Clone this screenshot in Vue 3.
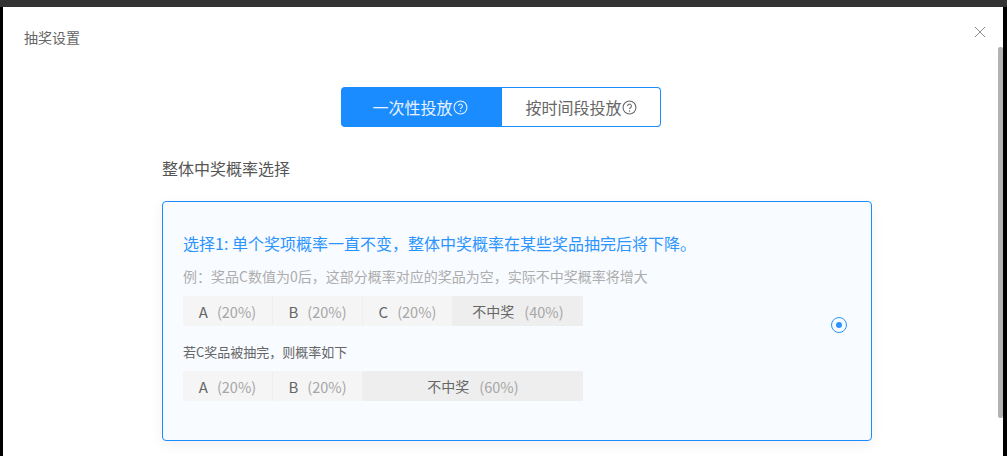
<script setup>
const rowA = [
  { name: 'A', pct: '(20%)' },
  { name: 'B', pct: '(20%)' },
  { name: 'C', pct: '(20%)' },
]
const rowB = [
  { name: 'A', pct: '(20%)' },
  { name: 'B', pct: '(20%)' },
]
</script>

<template>
  <div class="screen">
    <div class="dialog">
      <header class="head">
        <span class="head-title">抽奖设置</span>
        <svg class="close" width="12" height="12" viewBox="0 0 12 12" aria-hidden="true">
          <path d="M1 1l10 10M11 1L1 11" stroke="#8c8c8c" stroke-width="1" fill="none" />
        </svg>
      </header>

      <div class="tabs">
        <div class="tab active">
          一次性投放
          <svg class="help" width="15" height="15" viewBox="0 0 14 14" aria-hidden="true">
            <circle cx="7" cy="7" r="6" fill="none" stroke="currentColor" />
            <path d="M5.2 5.6a1.8 1.8 0 1 1 2.7 1.6c-.6.3-.9.6-.9 1.3" fill="none" stroke="currentColor" />
            <circle cx="7" cy="10.2" r=".7" fill="currentColor" />
          </svg>
        </div>
        <div class="tab">
          按时间段投放
          <svg class="help" width="15" height="15" viewBox="0 0 14 14" aria-hidden="true">
            <circle cx="7" cy="7" r="6" fill="none" stroke="currentColor" />
            <path d="M5.2 5.6a1.8 1.8 0 1 1 2.7 1.6c-.6.3-.9.6-.9 1.3" fill="none" stroke="currentColor" />
            <circle cx="7" cy="10.2" r=".7" fill="currentColor" />
          </svg>
        </div>
      </div>

      <div class="section">
        <h3 class="section-title">整体中奖概率选择</h3>
        <div class="card">
          <div class="card-body">
            <div class="card-title">选择1: 单个奖项概率一直不变，整体中奖概率在某些奖品抽完后将下降。</div>
            <div class="card-desc">例：奖品C数值为0后，这部分概率对应的奖品为空，实际不中奖概率将增大</div>
            <div class="bar">
              <div v-for="s in rowA" :key="s.name" class="seg">
                <span class="nm">{{ s.name }}</span><span class="pct">{{ s.pct }}</span>
              </div>
              <div class="seg none w130">
                <span class="nm cjk">不中奖</span><span class="pct">(40%)</span>
              </div>
            </div>
            <div class="card-note">若C奖品被抽完，则概率如下</div>
            <div class="bar">
              <div v-for="s in rowB" :key="s.name" class="seg">
                <span class="nm">{{ s.name }}</span><span class="pct">{{ s.pct }}</span>
              </div>
              <div class="seg none w220">
                <span class="nm cjk">不中奖</span><span class="pct">(60%)</span>
              </div>
            </div>
          </div>
          <span class="radio"><span class="dot"></span></span>
        </div>
      </div>

      <div class="scrollbar"></div>
    </div>
  </div>
</template>

<style>
html, body { margin: 0; background: #000; overflow: hidden; }
</style>

<style scoped>
.screen {
  width: 1007px;
  height: 456px;
  background: #000;
  overflow: hidden;
  font-family: "Noto Sans CJK SC", "Noto Sans", sans-serif;
  box-sizing: border-box;
  border-top: 7px solid #333;
  padding-left: 3px;
  padding-right: 4px;
}
.dialog {
  position: relative;
  background: #fff;
  height: 449px;
  box-sizing: border-box;
  overflow: hidden;
}
.head {
  display: flex;
  justify-content: space-between;
  align-items: flex-start;
  padding: 20px 17px 0 21px;
  height: 80px;
  box-sizing: border-box;
}
.head-title { font-size: 14px; line-height: 20px; color: #666; }
.close { margin-top: -1px; }
.tabs { display: flex; margin-left: 338px; width: 320px; height: 40px; }
.tab {
  width: 159px;
  box-sizing: border-box;
  display: flex;
  align-items: center;
  justify-content: center;
  font-size: 16px;
  color: #666;
  border: 1px solid #1a8cff;
  border-left: 0;
  border-radius: 0 4px 4px 0;
}
.tab.active {
  width: 161px;
  background: #1a8cff;
  color: #e8f3ff;
  border: 0;
  border-radius: 4px 0 0 4px;
  padding-right: 3px;
}
.section { margin-left: 159px; width: 710px; }
.section-title {
  margin: 29px 0 21px;
  font-size: 16px;
  font-weight: 400;
  line-height: 24px;
  color: #555;
}
.card {
  height: 240px;
  box-sizing: border-box;
  border: 1px solid #1a8cff;
  border-radius: 4px;
  background: #f8fbff;
  box-shadow: 0 4px 14px rgba(0, 0, 0, 0.06);
  padding: 0 24px 0 20px;
  display: flex;
  align-items: center;
  justify-content: space-between;
}
.card-body { align-self: flex-start; width: 640px; padding-top: 30px; }
.card-title { font-size: 16px; line-height: 22px; color: #2b94ff; white-space: nowrap; }
.card-desc { margin-top: 12px; font-size: 14px; line-height: 20px; color: #adadad; white-space: nowrap; }
.card-note { margin-top: 16px; font-size: 13px; line-height: 20px; color: #666; }
.bar { display: flex; margin-top: 9px; width: 400px; height: 30px; }
.card-desc + .bar { margin-top: 10px; }
.seg {
  width: 90px;
  box-sizing: border-box;
  background: #f5f5f5;
  border-right: 1px solid #eeeeee;
  display: flex;
  align-items: center;
  justify-content: center;
  gap: 9px;
  font-size: 14px;
}
.seg.none { background: #eeeeee; border-right: 0; gap: 10px; }
.w130 { width: 130px; }
.w220 { width: 220px; }
.nm { color: #666; font-size: 15px; }
.nm.cjk { font-size: 14px; }
.pct { color: #a6a6a6; font-size: 14.5px; }
.radio {
  width: 16px;
  height: 16px;
  margin-top: 8px;
  box-sizing: border-box;
  border: 1px solid #2b94ff;
  border-radius: 50%;
  display: flex;
  align-items: center;
  justify-content: center;
}
.dot { width: 6px; height: 6px; border-radius: 50%; background: #2b94ff; }
.scrollbar {
  position: absolute;
  right: 0;
  top: 40px;
  width: 5px;
  height: 371px;
  background: #b3b3b3;
  border-radius: 2px;
}
</style>
